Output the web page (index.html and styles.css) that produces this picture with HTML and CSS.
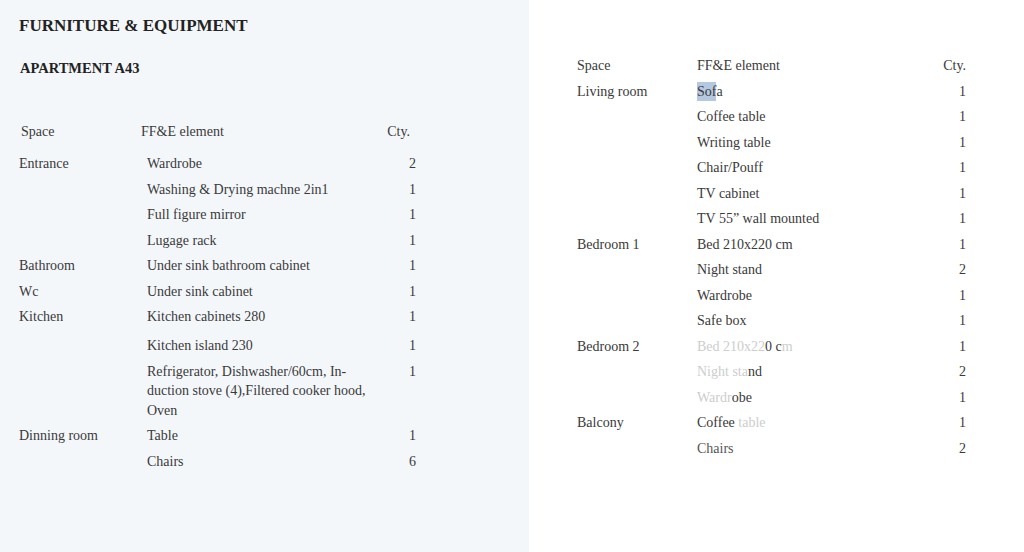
FILE: index.html
```html
<!DOCTYPE html>
<html>
<head>
<meta charset="utf-8">
<link rel="stylesheet" href="styles.css">
</head>
<body>
<div class="page">
  <section class="left">
    <h1 class="title">FURNITURE &amp; EQUIPMENT</h1>
    <h2 class="subtitle">APARTMENT A43</h2>
    <div class="grid head-left">
      <div>Space</div><div>FF&amp;E element</div><div class="q">Cty.</div>
    </div>
    <div class="grid data-left">
      <div>Entrance</div><div>Wardrobe</div><div class="q">2</div>
      <div></div><div>Washing &amp; Drying machne 2in1</div><div class="q">1</div>
      <div></div><div>Full figure mirror</div><div class="q">1</div>
      <div></div><div>Lugage rack</div><div class="q">1</div>
      <div>Bathroom</div><div>Under sink bathroom cabinet</div><div class="q">1</div>
      <div>Wc</div><div>Under sink cabinet</div><div class="q">1</div>
      <div class="gap">Kitchen</div><div class="gap">Kitchen cabinets 280</div><div class="q gap">1</div>
      <div></div><div>Kitchen island 230</div><div class="q">1</div>
      <div></div><div>Refrigerator, Dishwasher/60cm, In-<br>duction stove (4),Filtered cooker hood,<br>Oven</div><div class="q">1</div>
      <div>Dinning room</div><div>Table</div><div class="q">1</div>
      <div></div><div>Chairs</div><div class="q">6</div>
    </div>
  </section>
  <section class="right">
    <div class="grid tbl-right">
      <div>Space</div><div>FF&amp;E element</div><div class="q">Cty.</div>
      <div>Living room</div><div><span class="sel">Sof</span>a</div><div class="q">1</div>
      <div></div><div>Coffee table</div><div class="q">1</div>
      <div></div><div>Writing table</div><div class="q">1</div>
      <div></div><div>Chair/Pouff</div><div class="q">1</div>
      <div></div><div>TV cabinet</div><div class="q">1</div>
      <div></div><div>TV 55” wall mounted</div><div class="q">1</div>
      <div>Bedroom 1</div><div>Bed 210x220 cm</div><div class="q">1</div>
      <div></div><div>Night stand</div><div class="q">2</div>
      <div></div><div>Wardrobe</div><div class="q">1</div>
      <div></div><div>Safe box</div><div class="q">1</div>
      <div>Bedroom 2</div><div><span class="fade">Bed 210x22</span>0 c<span class="fade">m</span></div><div class="q">1</div>
      <div></div><div><span class="fade">Night sta</span>nd</div><div class="q">2</div>
      <div></div><div><span class="fade">Wardr</span>obe</div><div class="q">1</div>
      <div>Balcony</div><div>Coffee <span class="fade">table</span></div><div class="q">1</div>
      <div></div><div class="dim">Chairs</div><div class="q">2</div>
    </div>
  </section>
</div>
</body>
</html>
```
FILE: styles.css
```css
html, body {
  margin: 0;
  padding: 0;
}
body {
  font-family: "Liberation Serif", "Times New Roman", serif;
  color: #3a3a3a;
  background: #ffffff;
}
.page {
  display: flex;
  width: 1024px;
  height: 552px;
  overflow: hidden;
}
.left {
  width: 529px;
  flex: none;
  background: #f4f7fa;
  box-sizing: border-box;
  padding: 15px 0 0 19px;
}
.right {
  flex: 1;
  padding: 53px 0 0 48px;
}
.title {
  margin: 0;
  font-size: 17px;
  line-height: 22px;
  font-weight: bold;
  color: #222;
}
.subtitle {
  margin: 22px 0 0 1px;
  font-size: 14.5px;
  line-height: 18px;
  font-weight: bold;
  color: #222;
}
.grid {
  display: grid;
  font-size: 14px;
  line-height: 19.5px;
}
.grid > div {
  padding: 3px 0;
}
.q {
  text-align: right;
}
.head-left {
  margin: 42px 0 0 2px;
  width: 389px;
  grid-template-columns: 120px 1fr 40px;
}
.data-left {
  margin-top: 6.5px;
  width: 397px;
  grid-template-columns: 128px 1fr 40px;
}
.data-left > .gap {
  padding-bottom: 6.5px;
}
.tbl-right {
  width: 389px;
  grid-template-columns: 120px 1fr 40px;
}
.sel {
  background: #b4c8e1;
  padding: 2px 0 2px;
}
.fade {
  color: #cdcdcd;
}
.dim {
  color: #555;
}
```
